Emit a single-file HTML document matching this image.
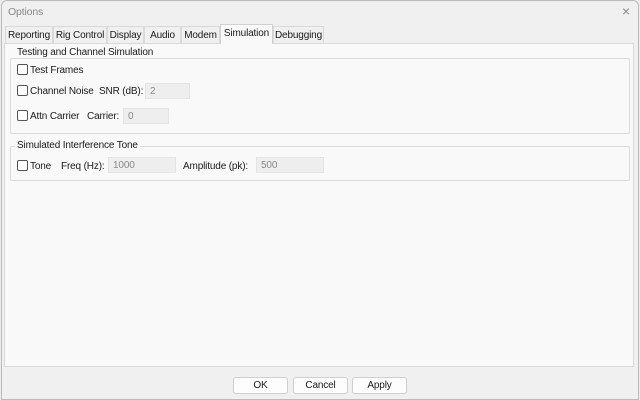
<!DOCTYPE html>
<html><head><style>
*{margin:0;padding:0;box-sizing:border-box}
body{width:640px;height:400px;background:#ececec;font-family:"Liberation Sans",sans-serif;font-size:10px;letter-spacing:-0.15px;color:#1a1a1a;position:relative;overflow:hidden}
.win{position:absolute;left:1px;top:0;width:638px;height:400px;background:#f0f0f0;border:1px solid #bbb;border-radius:6px 6px 0 0}
.abs{position:absolute;white-space:nowrap}
.l{margin-top:1px}
.tab{position:absolute;top:26px;height:17px;background:#f0f0f0;border:1px solid #d9d9d9;border-bottom:none;text-align:center;line-height:17px;white-space:nowrap}
.tab.sel{top:24px;height:20px;background:#f9f9f9;z-index:2;border-color:#d0d0d0;line-height:18px}
.panel{position:absolute;left:4px;top:43px;width:630px;height:324px;background:#f9f9f9;border:1px solid #d9d9d9}
.grp{position:absolute;border:1px solid #dcdcdc;border-radius:2px}
.cb{position:absolute;width:11px;height:11px;border:1px solid #555;border-radius:2px;background:#fff}
.inp{position:absolute;height:16px;background:#eeeeee;border:1px solid #e4e4e4;color:#8a8a8a;padding-left:4px;line-height:15px}
.btn{position:absolute;top:377px;width:55px;height:17px;background:#fdfdfd;border:1px solid #cfcfcf;border-radius:3px;text-align:center;line-height:15px}
</style></head><body>
<div class="win"></div>
<div class="abs" style="left:8px;top:6px;color:#888;font-size:10.5px">Options</div>
<div class="abs" style="left:622px;top:3px;color:#888;font-size:14px">×</div>
<div class="panel"></div>
<div class="tab" style="left:5px;width:48px">Reporting</div>
<div class="tab" style="left:53px;width:54px">Rig Control</div>
<div class="tab" style="left:107px;width:37px">Display</div>
<div class="tab" style="left:144px;width:37px">Audio</div>
<div class="tab" style="left:181px;width:39px">Modem</div>
<div class="tab sel" style="left:220px;width:53px">Simulation</div>
<div class="tab" style="left:273px;width:51px">Debugging</div>

<div class="grp" style="left:10px;top:58px;width:620px;height:76px"></div>
<div class="abs" style="left:15px;top:47px;background:#f9f9f9;padding:0 2px">Testing and Channel Simulation</div>
<div class="cb" style="left:17px;top:64px"></div><div class="abs l" style="left:30px;top:64px">Test Frames</div>
<div class="cb" style="left:17px;top:85px"></div><div class="abs l" style="left:30px;top:85px">Channel Noise</div>
<div class="abs l" style="left:99px;top:85px">SNR (dB):</div>
<div class="inp" style="left:145px;top:83px;width:45px">2</div>
<div class="cb" style="left:17px;top:110px"></div><div class="abs l" style="left:30px;top:110px">Attn Carrier</div>
<div class="abs l" style="left:87px;top:110px">Carrier:</div>
<div class="inp" style="left:123px;top:108px;width:46px">0</div>

<div class="grp" style="left:10px;top:146px;width:620px;height:35px"></div>
<div class="abs" style="left:15px;top:140px;background:#f9f9f9;padding:0 2px">Simulated Interference Tone</div>
<div class="cb" style="left:17px;top:160px"></div><div class="abs l" style="left:30px;top:160px">Tone</div>
<div class="abs l" style="left:61px;top:160px">Freq (Hz):</div>
<div class="inp" style="left:108px;top:157px;width:68px">1000</div>
<div class="abs l" style="left:183px;top:160px">Amplitude (pk):</div>
<div class="inp" style="left:256px;top:157px;width:68px">500</div>

<div class="btn" style="left:233px">OK</div>
<div class="btn" style="left:293px">Cancel</div>
<div class="btn" style="left:352px">Apply</div>
</body></html>
